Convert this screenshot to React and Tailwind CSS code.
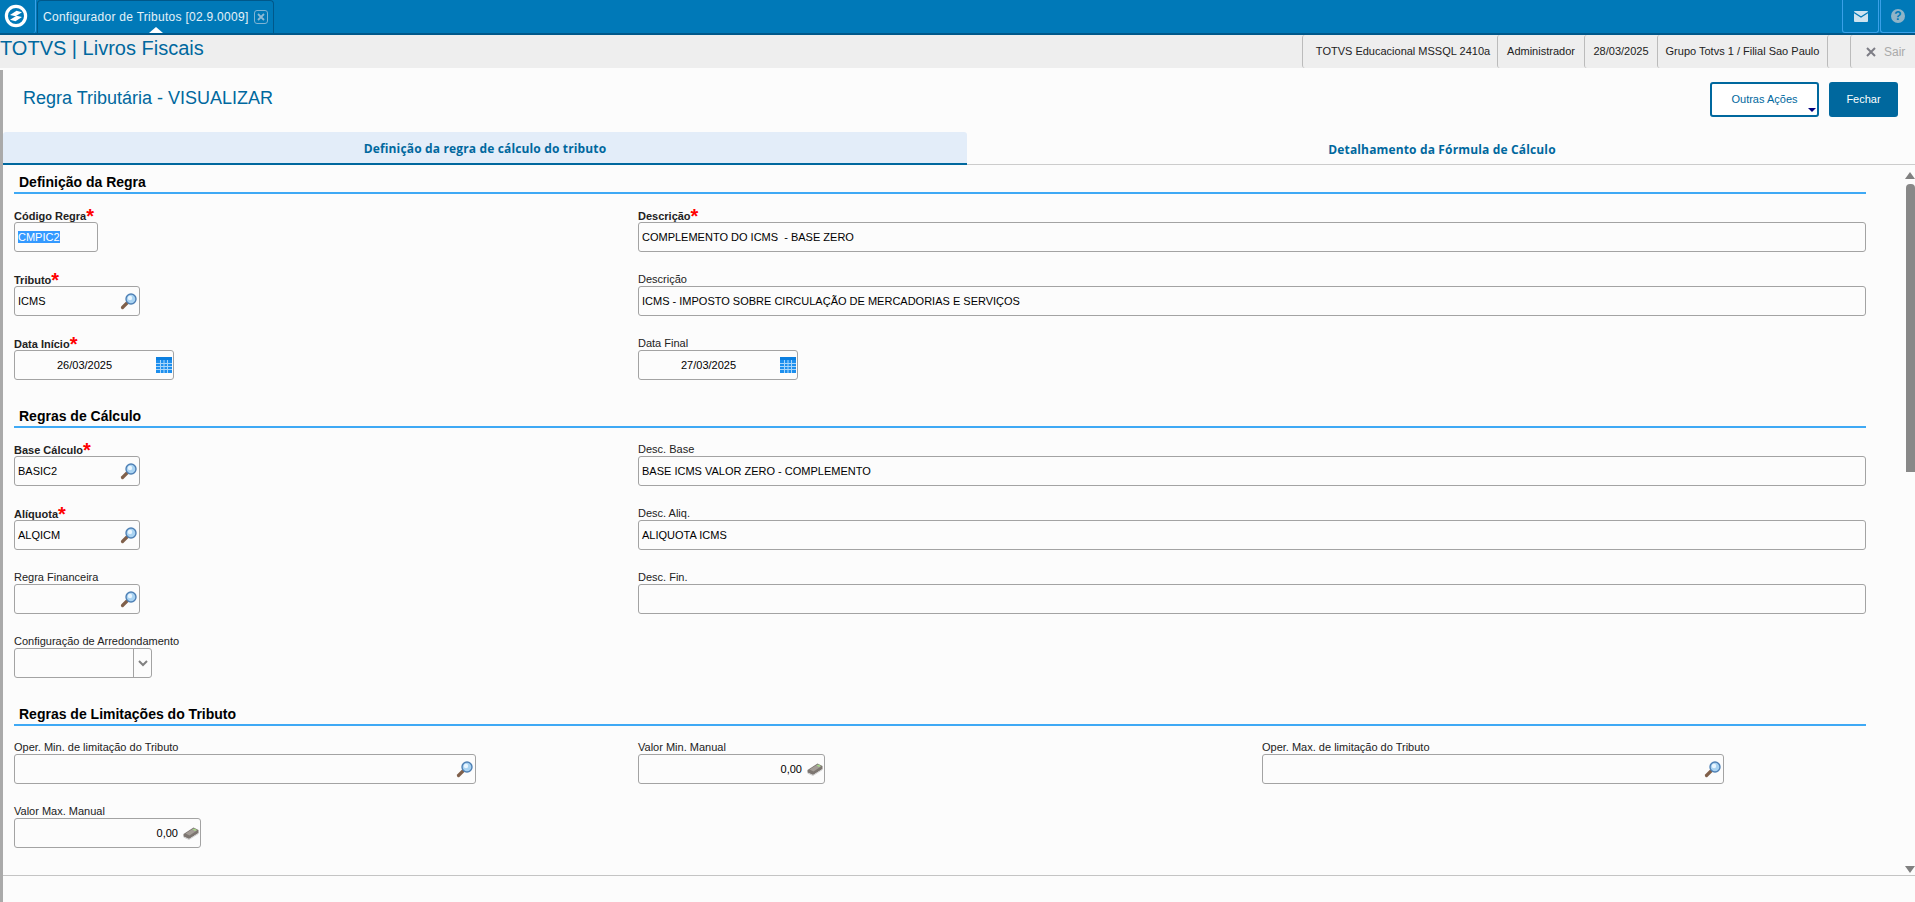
const font = "font-['Liberation_Sans',Arial,sans-serif]";

function Logo() {
    return (
        <svg width="24" height="24" viewBox="0 0 24 24" fill="none">
            <circle cx="12" cy="12" r="9.6" stroke="#fff" strokeWidth="3.2" />
            <path d="M6 11 L12.5 6.8 L18 8.2 L11.5 12.2 Z" fill="#fff" />
            <path d="M18 13 L11.5 17.2 L6 15.8 L12.5 11.8 Z" fill="#fff" />
        </svg>
    );
}

function LupaIcon() {
    return (
        <svg width="18" height="18" viewBox="0 0 18 18" className="shrink-0">
            <path d="M7.5 10.5 L2.5 15.5" stroke="#80604a" strokeWidth="3.2" strokeLinecap="round" />
            <circle cx="11" cy="7" r="5" fill="#a9d3f2" stroke="#4f80b5" strokeWidth="1.4" />
            <circle cx="10" cy="6" r="2.2" fill="#e8f5ff" />
        </svg>
    );
}

function CalendarIcon() {
    return (
        <svg width="16" height="16" viewBox="0 0 16 16" className="shrink-0">
            <rect width="16" height="16" fill="#1d8fee" />
            <rect y="0" width="16" height="3" fill="#0b7fe0" />
            <path d="M4.5 3v13M8 3v13M11.5 3v13M0 6.5h16M0 9.5h16M0 12.5h16" stroke="#a9d6fa" strokeWidth="1" />
        </svg>
    );
}

function MoneyIcon() {
    return (
        <svg width="16" height="14" viewBox="0 0 16 14" className="shrink-0">
            <path d="M0.5 8 L10.5 1.5 L15.5 4 L15.5 7 L6 13 L0.5 10.5 Z" fill="#7d7671" />
            <path d="M2.5 7.5 L10.5 2.5 L14 4.5 L6.5 9.5 Z" fill="#a39c96" />
            <path d="M9.5 3.5 L11.5 2.5 L14 4 L12 5 Z" fill="#a6d68a" />
            <path d="M0.5 11 L6 13.5 L15.5 7.5" stroke="#cfcfcf" strokeWidth="1" fill="none" />
        </svg>
    );
}

function Heading({ children }) {
    return (
        <div className="h-[28px] flex flex-col justify-end">
            <div className="pl-[5px] text-[14px] leading-[17px] font-bold text-black">{children}</div>
            <div className="h-[2px] mt-px bg-[#3fa9f5]" />
        </div>
    );
}

function Field({ label, required, width, align, icon, children, className }) {
    return (
        <div className={className}>
            <div className={`h-[14px] leading-[14px] text-[11px] whitespace-nowrap text-[#222] ${required ? 'font-bold' : ''}`}>
                {label}
                {required && <span className="inline-block translate-y-[3px] text-[#f00] text-[20px] leading-[10px] font-bold">*</span>}
            </div>
            <div className={`${width} h-[30px] border border-[#a3a3a3] rounded-[3px] flex items-center pl-[3px] pr-px text-[11px] text-black`}>
                <div className={`flex-1 min-w-0 whitespace-nowrap ${align}`}>{children}</div>
                {icon}
            </div>
        </div>
    );
}

function Row({ children }) {
    return <div className="grid grid-cols-[624px_624px_1fr] h-[64px]">{children}</div>;
}

function TopBar() {
    return (
        <div className="h-[35px] bg-[#0079b8] border-b-2 border-[#00588a] flex shrink-0">
            <div className="w-[36px] pr-[3px] pb-[2px] flex items-center justify-center border-r border-[#3aa0e8] rounded-br-[3px]">
                <Logo />
            </div>
            <div className="relative w-[237px] ml-px border-x border-t border-[#00588a] rounded-t-[4px] flex items-center pl-[5px] text-[12px] text-white/90 tracking-[0.28px]">
                <span className="whitespace-nowrap">Configurador de Tributos [02.9.0009]</span>
                <span className="ml-[5px] w-[14px] h-[14px] rounded-[3px] border border-[#7fb4d4] flex items-center justify-center">
                    <svg width="8" height="8" viewBox="0 0 8 8"><path d="M1 1l6 6M7 1l-6 6" stroke="#8fbad4" strokeWidth="1.8" /></svg>
                </span>
                <span className="absolute left-[111px] bottom-0 w-0 h-0 border-x-[7px] border-x-transparent border-b-[6px] border-b-white" />
            </div>
            <div className="flex-1" />
            <div className="w-[37px] border border-t-0 border-[#3aa0e8] rounded-b-[3px] flex items-center justify-center">
                <svg width="14" height="11" viewBox="0 0 14 11">
                    <rect width="14" height="11" rx="1" fill="#cfe3ef" />
                    <path d="M0 1.5l7 4.5 7-4.5" stroke="#0079b8" strokeWidth="1.2" fill="none" />
                </svg>
            </div>
            <div className="w-[35px] ml-px border border-t-0 border-r-0 border-[#3aa0e8] rounded-bl-[3px] flex items-center justify-center">
                <span className="w-[14px] h-[14px] rounded-full bg-[#8fb4c8] text-[#0079b8] text-[12px] font-bold leading-[14px] text-center">?</span>
            </div>
        </div>
    );
}

function InfoCell({ children, className }) {
    return <div className={`h-full flex items-center justify-center border-l border-[#bbb] rounded-l-[3px] text-[11px] text-[#222] whitespace-nowrap ${className}`}>{children}</div>;
}

function InfoBar() {
    return (
        <div className="h-[33px] bg-[#eee] flex items-center shrink-0">
            <div className="flex-1 text-[20px] leading-[24px] text-[#00689e] -mt-[7px] whitespace-nowrap">TOTVS | Livros Fiscais</div>
            <InfoCell className="w-[195px] pl-[6px]">TOTVS Educacional MSSQL 2410a</InfoCell>
            <InfoCell className="w-[87px]">Administrador</InfoCell>
            <InfoCell className="w-[73px]">28/03/2025</InfoCell>
            <InfoCell className="w-[170px]">Grupo Totvs 1 / Filial Sao Paulo</InfoCell>
            <div className="w-[23px] h-full border-l border-[#bbb] rounded-l-[3px]" />
            <div className="w-[65px] h-full border-l border-[#bbb] rounded-l-[3px] flex items-center pl-[15px] gap-[8px] text-[12px] text-[#aaa]">
                <svg width="10" height="10" viewBox="0 0 10 10"><path d="M1 1l8 8M9 1l-8 8" stroke="#7d7d85" strokeWidth="2" /></svg>
                Sair
            </div>
        </div>
    );
}

function TitleBar() {
    return (
        <div className="h-[64px] flex items-start shrink-0">
            <div className="flex-1 pl-[20px] pt-[18px] text-[18px] leading-[24px] text-[#00689e]">Regra Tributária - VISUALIZAR</div>
            <div className="relative w-[109px] h-[35px] mt-[14px] border-2 border-[#00689e] rounded-[3px] bg-white flex items-center justify-center text-[11px] text-[#00689e]">
                Outras Ações
                <span className="absolute right-[1px] bottom-[3px] w-0 h-0 border-x-[4px] border-x-transparent border-t-[4px] border-t-[#00007f]" />
            </div>
            <div className="w-[69px] h-[35px] mt-[14px] ml-[10px] mr-[17px] rounded-[3px] bg-[#00689e] text-white text-[11px] flex items-center justify-center">Fechar</div>
        </div>
    );
}

function Tabs() {
    return (
        <div className="h-[33px] flex shrink-0 font-['Open_Sans',sans-serif] font-bold text-[12px] text-[#00689e] tracking-[0.15px]">
            <div className="w-[964px] pt-[3px] rounded-t-[3px] bg-[#e3edf9] border-b-2 border-[#00689e] flex items-center justify-center">Definição da regra de cálculo do tributo</div>
            <div className="flex-1 pt-[3px] pl-[2px] border-b border-[#ccc] flex items-center justify-center">Detalhamento da Fórmula de Cálculo</div>
        </div>
    );
}

function Scrollbar() {
    return (
        <div className="absolute right-0 top-[7px] bottom-[2px] w-[10px] flex flex-col items-center">
            <span className="w-0 h-0 border-x-[5px] border-x-transparent border-b-[7px] border-b-[#808080]" />
            <div className="w-[9px] h-[288px] mt-[5px] rounded-t-[4px] bg-[#888]" />
            <div className="flex-1" />
            <span className="w-0 h-0 border-x-[5px] border-x-transparent border-t-[7px] border-t-[#808080]" />
        </div>
    );
}

function Form() {
    const lupa = <LupaIcon />;
    const cal = <CalendarIcon />;
    const money = <MoneyIcon />;
    return (
        <div className="relative flex-1 min-h-0 pt-px border-b border-[#c4c4c4] overflow-hidden">
            <Scrollbar />
            <div className="pl-[11px] w-[1863px]">
                <Heading>Definição da Regra</Heading>
                <div className="pt-[14px]">
                    <Row>
                        <Field label="Código Regra" required width="w-[84px]">
                            <span className="bg-[#3399ff] text-white">CMPIC2</span>
                        </Field>
                        <Field label="Descrição" required width="w-[1228px]" className="col-span-2">COMPLEMENTO DO ICMS&nbsp; - BASE ZERO</Field>
                    </Row>
                    <Row>
                        <Field label="Tributo" required width="w-[126px]" icon={lupa}>ICMS</Field>
                        <Field label="Descrição" width="w-[1228px]" className="col-span-2">ICMS - IMPOSTO SOBRE CIRCULAÇÃO DE MERCADORIAS E SERVIÇOS</Field>
                    </Row>
                    <Row>
                        <Field label="Data Início" required width="w-[160px]" align="pl-[39px]" icon={cal}>26/03/2025</Field>
                        <Field label="Data Final" width="w-[160px]" align="pl-[39px]" icon={cal}>27/03/2025</Field>
                    </Row>
                </div>
                <Heading>Regras de Cálculo</Heading>
                <div className="pt-[14px]">
                    <Row>
                        <Field label="Base Cálculo" required width="w-[126px]" icon={lupa}>BASIC2</Field>
                        <Field label="Desc. Base" width="w-[1228px]" className="col-span-2">BASE ICMS VALOR ZERO - COMPLEMENTO</Field>
                    </Row>
                    <Row>
                        <Field label="Alíquota" required width="w-[126px]" icon={lupa}>ALQICM</Field>
                        <Field label="Desc. Aliq." width="w-[1228px]" className="col-span-2">ALIQUOTA ICMS</Field>
                    </Row>
                    <Row>
                        <Field label="Regra Financeira" width="w-[126px]" icon={lupa} />
                        <Field label="Desc. Fin." width="w-[1228px]" className="col-span-2" />
                    </Row>
                    <Row>
                        <div>
                            <div className="h-[14px] leading-[14px] text-[11px] text-[#222] whitespace-nowrap">Configuração de Arredondamento</div>
                            <div className="w-[138px] h-[30px] border border-[#a3a3a3] rounded-[3px] flex justify-end">
                                <div className="w-[18px] h-full border-l border-[#a3a3a3] flex items-center justify-center">
                                    <svg width="10" height="7" viewBox="0 0 10 7"><path d="M1 1l4 4 4-4" stroke="#808080" strokeWidth="2" fill="none" /></svg>
                                </div>
                            </div>
                        </div>
                    </Row>
                </div>
                <Heading>Regras de Limitações do Tributo</Heading>
                <div className="pt-[14px]">
                    <Row>
                        <Field label="Oper. Min. de limitação do Tributo" width="w-[462px]" icon={lupa} />
                        <Field label="Valor Min. Manual" width="w-[187px]" align="text-right pr-[5px]" icon={money}>0,00</Field>
                        <Field label="Oper. Max. de limitação do Tributo" width="w-[462px]" icon={lupa} />
                    </Row>
                    <Row>
                        <Field label="Valor Max. Manual" width="w-[187px]" align="text-right pr-[5px]" icon={money}>0,00</Field>
                    </Row>
                </div>
            </div>
        </div>
    );
}

export default function App() {
    return (
        <div className={`h-[902px] w-[1915px] overflow-hidden flex flex-col bg-[#fcfcfc] ${font}`}>
            <TopBar />
            <InfoBar />
            <div className="flex-1 min-h-0 flex">
                <div className="w-[3px] mt-[2px] bg-[#aaa] shrink-0" />
                <div className="flex-1 min-w-0 flex flex-col">
                    <TitleBar />
                    <Tabs />
                    <Form />
                    <div className="h-[26px] shrink-0" />
                </div>
            </div>
        </div>
    );
}
